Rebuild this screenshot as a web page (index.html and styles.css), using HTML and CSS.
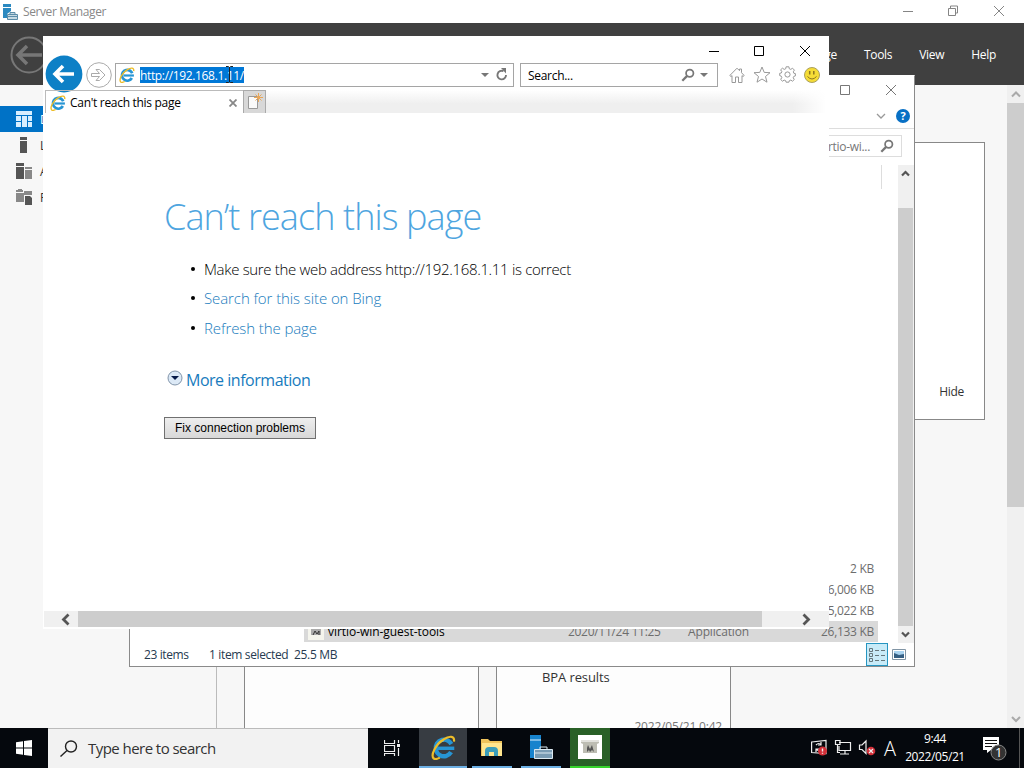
FILE: index.html
```html
<!DOCTYPE html>
<html>
<head>
  <meta charset="utf-8">
  <title>Can't reach this page</title>
  <link rel="stylesheet" href="styles.css">
</head>
<body>
  <svg width="0" height="0" class="defs">
    <symbol id="ie" viewBox="0 0 16 16">
      <circle cx="8.300" cy="8.300" r="5.300" fill="none" stroke="#2795d4" stroke-width="2.800" stroke-dasharray="27.700 5.600" transform="rotate(31 8.300 8.300)"/>
      <path d="M4.500 8.500h10.400" stroke="#2795d4" stroke-width="2.200"/>
      <path d="M4.200 6q1.500-2.300 4-2.500" fill="none" stroke="#7fcdf2"/>
      <path d="M1.700 15C-.4 12.800 3 6 8 2.900c3.700-2.500 7.300-2.600 6.700 1.300M1.700 15q1.200 1 4-.5" fill="none" stroke="#edbd29" stroke-width="1.400"/>
    </symbol>
    <symbol id="server" viewBox="0 0 24 24">
      <path d="M1 0h11v23H1z" fill="#1783cd"/>
      <path d="M1 5h11" stroke="#dff2ff"/>
      <path d="M5.500 14.500h18v9h-18z" fill="#799bb3" stroke="#dce9f1"/>
      <path d="M11 14v-2h7v2M6 18h17" fill="none" stroke="#dce9f1"/>
    </symbol>
    <symbol id="server-small" viewBox="0 0 16 16">
      <path d="M1 0h8v7L5 10v4H1z" fill="#2b89c0"/>
      <path d="M1 3.500h8" stroke="#fff"/>
      <path d="M5.500 10.500h10v5h-10zM8 10.500v-2h5v2M6 12.500h9" fill="#c7dae3" stroke="#5d8da8"/>
    </symbol>
    <symbol id="glass" viewBox="0 0 16 16">
      <circle cx="10" cy="6" r="4.200" fill="none" stroke="currentColor" stroke-width="2"/>
      <path d="M7 9L1.500 14.500" stroke="currentColor" stroke-width="2.600"/>
    </symbol>
  </svg>

  <div class="desktop">
    <!-- Server Manager -->
    <div class="window server-manager">
      <div class="sm-title">
        <svg width="16" height="16"><use href="#server-small"/></svg>
        <span class="sm-name">Server Manager</span>
        <svg class="sm-buttons" width="104" height="22" fill="none" stroke="#858585">
          <path d="M3 10.500h10M48.500 7.500h7v7h-7zM50.500 7v-2h7v7h-2M94 5l10 10M104 5l-10 10"/>
        </svg>
      </div>
      <div class="sm-header">
        <svg class="sm-back" width="38" height="38" fill="none" stroke="#777">
          <circle cx="19" cy="19" r="17.500" stroke-width="2"/>
          <path d="M8 19h24M17 10l-9 9 9 9" stroke-width="3.500"/>
        </svg>
        <div class="sm-menu"><span>Manage</span><span>Tools</span><span>View</span><span>Help</span></div>
      </div>
      <div class="sm-body">
        <div class="sm-side">
          <div class="side-item active"><svg width="16" height="16" fill="#d9efff"><path d="M0 0h16v4H0zM0 5h5v5H0zM0 11h5v5H0zM6 5h5v11H6zM12 5h4v5h-4zM12 11h4v5h-4z"/></svg>Dashboard</div>
          <div class="side-item"><svg width="16" height="16" fill="#555"><path d="M4 0h7v3H4zM4 4h7v12H4z"/></svg>Local Server</div>
          <div class="side-item"><svg width="16" height="16" fill="#555"><path d="M0 0h8v3H0zM0 4h8v12H0z"/><path d="M9 4h7v2H9zM9 7h7v9H9z" fill="#888"/></svg>All Servers</div>
          <div class="side-item"><svg width="16" height="16" fill="#888"><path d="M0 1h2V0h4v1h1v2H0zM0 4h8v9H0zM8 2h8v4H8z"/><path d="M9 7h5l2 2v7H9z" fill="#555"/></svg>File and Storage Services</div>
        </div>
        <div class="sm-main">
          <div class="welcome"><span>Hide</span></div>
          <div class="tiles">
            <div class="tile"></div>
            <div class="tile"><p>BPA results</p><p class="tile-time">2022/05/21 0:42</p></div>
          </div>
        </div>
        <div class="sm-scroll">
          <svg width="17" height="18" fill="none" stroke="#aaa" stroke-width="2"><path d="M5 11.500l4-4 4 4"/></svg>
          <div class="thumb"></div>
          <svg width="17" height="18" fill="none" stroke="#aaa" stroke-width="2"><path d="M5 7l4 4 4-4"/></svg>
        </div>
      </div>
    </div>

    <!-- File Explorer -->
    <div class="window explorer">
      <div class="ex-title">
        <svg width="56" height="12" fill="none" stroke="#777"><path d="M.5 1.500h9v9h-9zM46 1l10 10M56 1L46 11"/></svg>
      </div>
      <div class="ex-ribbon">
        <svg width="10" height="6" fill="none" stroke="#999" stroke-width="1.300"><path d="M1 1l4 4 4-4"/></svg>
        <span class="help">?</span>
      </div>
      <div class="ex-address"><div class="ex-search"><span>Search virtio-wi...</span><svg width="14" height="14"><use href="#glass"/></svg></div></div>
      <div class="ex-body">
        <div class="files">
          <div class="col-line"></div>
          <div class="file"><span class="size">2 KB</span></div>
          <div class="file"><span class="size">6,006 KB</span></div>
          <div class="file"><span class="size">5,022 KB</span></div>
          <div class="file selected">
            <svg width="16" height="16"><path d="M0 0h16v16H0z" fill="#f5f5ed"/><path d="M3 5h10v6H3z" fill="#aaa"/><path d="M5 11l2-4 2 3 2-3v4" fill="none" stroke="#333"/></svg>
            <span class="name">virtio-win-guest-tools</span><span class="date">2020/11/24 11:25</span><span class="type">Application</span><span class="size">26,133 KB</span>
          </div>
        </div>
        <div class="ex-scroll">
          <svg width="15" height="17" fill="none" stroke="#555" stroke-width="2.200"><path d="M4 10.500L7.500 7l3.500 3.500"/></svg>
          <div class="thumb"></div>
          <svg width="15" height="16" fill="none" stroke="#555" stroke-width="2.200"><path d="M4 6.500L7.500 10l3.500-3.500"/></svg>
        </div>
      </div>
      <div class="ex-status">
        <span class="count">23 items</span><span class="chosen">1 item selected</span><span>25.5 MB</span>
        <div class="view on"><svg width="18" height="14" fill="none" stroke="#66777d"><path d="M1.500.5h3v3h-3zM1.500 5.500h3v3h-3zM1.500 10.500h3v3h-3zM7 2.500h4M13 2.500h4M7 7.500h4M13 7.500h4M7 12.500h4M13 12.500h4"/></svg></div>
        <div class="view"><svg width="14" height="11"><path d="M.5.5h13v10H.5z" fill="#fff" stroke="#8195a5"/><path d="M2 2h10v7H2z" fill="#a9d3f0"/><path d="M2 4l5 2 5-1v4H2z" fill="#355f83"/></svg></div>
      </div>
    </div>

    <!-- Internet Explorer -->
    <div class="window ie">
      <div class="ie-top">
        <svg width="104" height="12" fill="none" stroke="#000"><path d="M0 6.500h10M45.500 1.500h9v9h-9zM91 1l10 10M101 1L91 11"/></svg>
      </div>
      <div class="ie-nav">
        <svg class="back" width="38" height="38"><circle cx="19" cy="19" r="18.400" fill="#0d80c6"/><path d="M9.500 19H29M18 11l-8 8 8 8" fill="none" stroke="#fff" stroke-width="3.600"/></svg>
        <svg class="forward" width="26" height="26" fill="none" stroke="#aaa"><circle cx="13" cy="13" r="12.300"/><path d="M5.500 11.500h8l-3.500-4h3.500l5.500 5.500-5.500 5.500H10l3.500-4h-8z"/></svg>
        <div class="box address">
          <svg width="16" height="16"><use href="#ie"/></svg>
          <span class="url">http://192.168.1.11/</span>
          <svg class="address-tools" width="28" height="14"><path d="M0 5h8l-4 4z" fill="#777"/><path d="M22.500 3.200A4.300 4.300 0 1 0 25 7" fill="none" stroke="#777" stroke-width="1.900"/><path d="M20 0h5v5.500z" fill="#777"/></svg>
        </div>
        <div class="box search">
          <span>Search...</span>
          <svg width="14" height="14"><use href="#glass"/></svg>
          <svg width="8" height="5" fill="#777"><path d="M0 0h8L4 4z"/></svg>
        </div>
        <div class="ie-tools">
          <svg width="16" height="16" fill="none" stroke="#999"><path d="M.8 8.500L8 1.200l2.500 2.500V2h2v3.700l2.700 2.800-1.200 1-1-.9v6.900h-3.500V10h-3v5.500H3V8.600l-1 .9z"/></svg>
          <svg width="18" height="17" fill="none" stroke="#999"><path d="M9 1l2.200 5.400 5.800.3-4.500 3.800 1.500 5.700L9 13l-5 3.200 1.500-5.700L1 6.700l5.800-.3z"/></svg>
          <svg width="17" height="17" viewBox="-8.500 -8.500 17 17" fill="none" stroke="#999"><path d="M-1.400-7.700h2.800l.4 2 1.500.6L5-6.300l1.900 1.900-1.100 1.700.6 1.500 1.500.3v2.300l-1.600.5-.6 1.400L6.800 5 5 6.700 3.300 5.600l-1.500.6-.4 1.500h-2.800l-.4-1.500-1.500-.6L-5 6.700-6.800 5l1.100-2-.6-1.400-1.500-.5v-2.300l1.600-.3.5-1.500-1.200-1.700L-5-6.300l1.700 1.200 1.500-.6z"/><circle r="2.600"/></svg>
          <svg width="16" height="16"><circle cx="8" cy="8" r="7.500" fill="#f5dc36" stroke="#aaa05e"/><path d="M5.700 4v3.500M9.800 4v3.500" stroke="#8c7520" stroke-width="1.500"/><path d="M3.500 9.500q4.500 5 9 0" fill="none" stroke="#8c7520"/></svg>
        </div>
      </div>
      <div class="tabs">
        <div class="tab">
          <svg width="16" height="16"><use href="#ie"/></svg><span>Can't reach this page</span>
          <svg class="tab-close" width="8" height="8" stroke="#888" stroke-width="1.800"><path d="M.5.500l7 7M7.500.500l-7 7"/></svg>
        </div>
        <div class="new-tab"><svg width="17" height="17"><path d="M1.500 3.500h9v12h-9z" fill="#fafafa" stroke="#999"/><path d="M11.500 0v9M7 4.500h9M8.500 1.500l6 6M14.500 1.500l-6 6" stroke="#e9a75a"/></svg></div>
        <div class="tab-rest"></div>
      </div>
      <div class="page">
        <h1>Can’t reach this page</h1>
        <ul>
          <li><span class="line1">Make sure the web address http://192.168.1.11 is correct</span></li>
          <li><a>Search for this site on Bing</a></li>
          <li><a>Refresh the page</a></li>
        </ul>
        <div class="more">
          <svg width="16" height="16"><circle cx="8" cy="8" r="7" fill="#dce9f6" stroke="#8295aa"/><path d="M4 6h8l-4 4z" fill="#061a48"/></svg><a>More information</a>
        </div>
        <button>Fix connection problems</button>
      </div>
      <div class="ie-scroll">
        <svg width="34" height="16" fill="none" stroke="#555" stroke-width="2.800"><path d="M24.500 3.500l-5 5 5 5"/></svg>
        <div class="thumb"></div>
        <svg width="67" height="16" fill="none" stroke="#555" stroke-width="2.800"><path d="M41.500 3.500l5 5-5 5"/></svg>
      </div>
      <!-- text cursor over the address -->
      <svg class="cursor" width="9" height="17" fill="none" stroke="#222"><path d="M1 .5h2.500l1 1 1-1H8M4.500 1v15M1 16.500h2.500l1-1 1 1H8"/></svg>
    </div>

    <div class="taskbar">
      <div class="start"><svg width="16" height="16" fill="#fff"><path d="M0 2.200L7 1.200v6.300H0zM8 1l8-1v7.500H8zM0 8.500h7v6.300l-7-1zM8 8.500h8V16l-8-1z"/></svg></div>
      <div class="task-search">
        <svg width="18" height="18" fill="none" stroke="#222" stroke-width="1.400"><circle cx="11" cy="6.500" r="5.500"/><path d="M7 10.500l-6.500 6"/></svg>
        <span>Type here to search</span>
      </div>
      <div class="task view-task"><svg width="17" height="16" fill="none" stroke="#eee" stroke-width="1.200"><path d="M.5 0v3.500h10V0M.5 5.500h10v6H.5zM.5 16v-2.500h10V16M14.500 0v3M14.500 8v8"/><path d="M13 4h3v3h-3z" fill="#eee" stroke="none"/></svg></div>
      <div class="task ie-task"><svg width="25" height="25"><use href="#ie"/></svg></div>
      <div class="task"><svg width="22" height="19"><path d="M0 1h7l2 2h12v15H0z" fill="#efc35b"/><path d="M1 5h20v13H1z" fill="#ffe58e"/><path d="M4 18v-5q0-4 4-4h5q4 0 4 4v5h-4v-4H8v4z" fill="#3c9eb9"/></svg></div>
      <div class="task"><svg width="24" height="24"><use href="#server"/></svg></div>
      <div class="task virtio"><svg width="24" height="24"><path d="M0 0h24v24H0z" fill="#fff"/><path d="M3 5h18v3l-2 1v9H5V9L3 8z" fill="#bdbdb3"/><path d="M3 5h18v2H3z" fill="#e2e2dd"/><path d="M9 17v-4l1-3 2 4 2-4 2 7-2-2-2 2-1-2z" fill="#555"/></svg></div>
      <div class="tray">
        <svg class="tray-icons" width="66" height="18" fill="none" stroke="#eee" stroke-width="1.200">
          <path d="M.600 3L15 1.500v13L.600 13.500zM5 6q3-3 5 0M5 10q3 3 5 0M10 3v3H7M5 13v-3h3"/><circle cx="11.500" cy="12" r="4.500" fill="#d22f38" stroke="none"/><path d="M11.500 9.500v3M11.500 13.700v1" stroke-width="1.400"/>
          <path d="M28 3.500h11.500v8H28V7M24.500 1.500h4.500v4h-4.500zM26.500 6v7.500H29M34 12v3M29 15h9"/>
          <path d="M48.500 6v4.500h2.500l4 4V2l-4 4z"/><circle cx="60" cy="12" r="4.300" fill="#d22f38" stroke="none"/><path d="M58 10l4 4M62 10l-4 4"/>
        </svg>
        <span class="lang">A</span>
        <div class="clock"><span>9:44</span><span class="day">2022/05/21</span></div>
        <svg class="notes" width="26" height="26"><path d="M1 2h16v13H9l-4 3v-3H1z" fill="#fff"/><path d="M3 5.500h12M3 8.500h12M3 11.500h7" stroke="#111"/><circle cx="16.500" cy="17.500" r="7.500" fill="#333" stroke="#888"/><text x="13" y="22" fill="#fff">1</text></svg>
        <div class="show-desktop"></div>
      </div>
    </div>
  </div>
</body>
</html>
```

FILE: styles.css
```css
* {
  box-sizing: border-box;
}

body {
  margin: 0;
  font-family: "Open Sans", "Noto Sans", sans-serif;
  font-size: 12px;
  letter-spacing: -0.3px;
  color: #333;
}

svg {
  display: block;
  flex-shrink: 0;
}

span, a {
  white-space: nowrap;
}

.defs {
  position: absolute;
}

.desktop {
  position: relative;
  width: 1024px;
  height: 768px;
  overflow: hidden;
}

.window {
  position: absolute;
  display: flex;
  flex-direction: column;
  overflow: hidden;
}

.thumb {
  background-color: #cdcdcd;
}

/* Server Manager */
.server-manager {
  left: 0;
  top: 0;
  width: 1024px;
  height: 728px;
  background-color: #f7f7f7;
}

.sm-title {
  height: 23px;
  display: flex;
  align-items: center;
  padding-left: 2px;
  background-color: #fff;
  color: #888;
}

.sm-name {
  margin-left: 5px;
  letter-spacing: -0.4px;
}

.sm-buttons {
  margin-left: auto;
  margin-right: 20px;
}

.sm-header {
  height: 62px;
  display: flex;
  align-items: center;
  justify-content: space-between;
  padding: 0 28px 0 10px;
  background-color: #404040;
  color: #fff;
}

.sm-back {
  margin-top: 1px;
}

.sm-menu {
  display: flex;
  gap: 27px;
  padding-top: 1px;
}

.sm-body {
  flex: 1;
  display: flex;
  min-height: 0;
}

.sm-side {
  width: 217px;
  padding-top: 21px;
  border-right: 1px solid #bbb;
}

.side-item {
  height: 26px;
  display: flex;
  align-items: center;
  gap: 8px;
  padding-left: 16px;
}

.side-item.active {
  background-color: #0072c6;
  color: #fff;
}

.sm-main {
  flex: 1;
  padding: 57px 22px 0 27px;
}

.welcome {
  height: 278px;
  display: flex;
  align-items: flex-end;
  justify-content: flex-end;
  padding: 0 20px 19px;
  border: 1px solid #888;
  background-color: #fff;
}

.tiles {
  display: flex;
  gap: 17px;
  padding-top: 230px;
}

.tile {
  width: 235px;
  height: 120px;
  padding: 17px 8px 0 45px;
  border: 1px solid #888;
  background-color: #fdfdfd;
}

.tile p {
  margin: 0;
  font-size: 13px;
  line-height: 18px;
  letter-spacing: -0.1px;
}

.tile .tile-time {
  margin-top: 32px;
  text-align: right;
  font-size: 12px;
  letter-spacing: -0.2px;
  color: #777;
}

.sm-scroll {
  width: 17px;
  display: flex;
  flex-direction: column;
  background-color: #f0f0f0;
}

.sm-scroll .thumb {
  height: 404px;
  margin-bottom: auto;
}

/* File Explorer */
.explorer {
  left: 129px;
  top: 75px;
  width: 786px;
  height: 592px;
  border: 1px solid #8a8a8a;
  border-top-color: #fff;
  background-color: #fff;
}

.ex-title {
  height: 27px;
  display: flex;
  align-items: center;
  justify-content: flex-end;
  padding-right: 18px;
}

.ex-ribbon {
  height: 26px;
  display: flex;
  align-items: center;
  justify-content: flex-end;
  gap: 10px;
  padding-right: 4px;
  border-bottom: 1px solid #ddd;
}

.help {
  width: 14px;
  height: 14px;
  border-radius: 50%;
  background-color: #0870c5;
  color: #fff;
  font-size: 11px;
  font-weight: bold;
  line-height: 14px;
  text-align: center;
}

.ex-address {
  height: 36px;
  display: flex;
  justify-content: flex-end;
  padding: 6px 12px;
}

.ex-search {
  width: 180px;
  height: 22px;
  display: flex;
  align-items: center;
  justify-content: flex-end;
  gap: 10px;
  padding-right: 7px;
  border: 1px solid #ddd;
  color: #777;
}

.ex-body {
  height: 478px;
  display: flex;
}

.files {
  flex: 1;
  padding: 0 20px 0 174px;
}

.col-line {
  height: 24px;
  margin: 0 -4px 369px 0;
  border-right: 1px solid #ddd;
}

.file {
  height: 21px;
  display: flex;
  align-items: center;
  padding: 0 4px;
  color: #6d6d6d;
}

.file.selected {
  background-color: #d9d9d9;
}

.file .name {
  width: 240px;
  margin-left: 4px;
  letter-spacing: -0.05px;
  color: #000;
}

.file .date {
  width: 120px;
}

.file .type {
  letter-spacing: -0.15px;
}

.file .size {
  margin-left: auto;
}

.ex-scroll {
  width: 16px;
  background-color: #f0f0f0;
}

.ex-scroll .thumb {
  width: 15px;
  height: 418px;
  margin-top: 26px;
}

.ex-status {
  flex: 1;
  display: flex;
  align-items: center;
  padding: 0 4px 0 14px;
  color: #263a50;
}

.count {
  width: 65px;
  letter-spacing: -0.4px;
}

.chosen {
  width: 85px;
  letter-spacing: -0.35px;
}

.view {
  width: 22px;
  height: 23px;
  display: flex;
  align-items: center;
  justify-content: center;
}

.view.on {
  margin-left: auto;
  border: 1px solid #2695c1;
  background-color: #c8ebf8;
}

/* Internet Explorer */
.ie {
  left: 43px;
  top: 36px;
  width: 786px;
  height: 593px;
  background-color: #fff;
  color: #000;
}

.ie-top {
  height: 21px;
  display: flex;
  align-items: flex-end;
  justify-content: flex-end;
  padding-right: 16px;
}

.ie-nav {
  height: 33px;
  display: flex;
  align-items: center;
  padding: 3px 9px 0 2px;
}

.back {
  margin-top: -2px;
}

.forward {
  margin-left: 3px;
  margin-right: 3px;
}

.box {
  height: 24px;
  display: flex;
  align-items: center;
  border: 1px solid #a5a5a5;
}

.address {
  width: 399px;
  padding: 0 4px 0 3px;
}

.url {
  height: 16px;
  margin-left: 5px;
  line-height: 17px;
  letter-spacing: -0.35px;
  background-color: #0078d7;
  color: #fff;
}

.address-tools {
  margin-left: auto;
}

.search {
  width: 198px;
  margin-left: 6px;
  padding: 0 9px 0 7px;
}

.search svg {
  margin-left: 5px;
  color: #777;
}

.search span {
  flex: 1;
}

.ie-tools {
  display: flex;
  align-items: center;
  gap: 8px;
  margin-left: auto;
  margin-top: -1px;
}

.tabs {
  height: 23px;
  display: flex;
  padding-left: 2px;
}

.tab {
  width: 198px;
  display: flex;
  align-items: center;
  gap: 4px;
  padding: 1px 6px 0 4px;
  border-left: 1px solid #bbb;
  border-top: 1px solid #bbb;
}

.tab-close {
  margin-left: auto;
}

.new-tab {
  width: 23px;
  padding: 2px 3px;
  border: 1px solid #aaa;
  border-bottom: 0;
  background-color: #d8d8d8;
}

.tab-rest {
  width: 560px;
  background: linear-gradient(to right, transparent 94%, #fff), linear-gradient(#fff, #efefef 60%);
}

.page {
  height: 498px;
  padding: 82px 0 0 121px;
}

.page h1 {
  height: 44px;
  margin: 0;
  font-size: 36px;
  font-weight: 300;
  line-height: 44px;
  letter-spacing: -0.9px;
  color: #4ea5df;
}

.page ul {
  margin: 15px 0 0;
  padding-left: 40px;
  font-size: 15px;
  list-style: none;
}

.page li {
  height: 29.500px;
  display: flex;
  align-items: center;
}

.page li::before {
  content: "";
  width: 4px;
  height: 4px;
  margin-left: -13px;
  margin-right: 9px;
  border-radius: 50%;
  background-color: #000;
}

.page li span,
.page li a {
  font-weight: 300;
  letter-spacing: -0.09px;
}

.page li .line1 {
  letter-spacing: -0.33px;
}

.page a {
  color: #187bbd;
}

.more {
  height: 24px;
  display: flex;
  align-items: center;
  gap: 3px;
  margin-top: 25px;
  padding-left: 3px;
  font-size: 16px;
  letter-spacing: -0.48px;
}

.more svg {
  margin-top: -3px;
}

.page button {
  width: 152px;
  height: 22px;
  display: block;
  margin-top: 25px;
  padding: 0;
  border: 1px solid #707070;
  background: linear-gradient(#eee, #d8d8d8);
  font: 12px "Liberation Sans", sans-serif;
}

.ie-scroll {
  height: 16px;
  display: flex;
  margin: 0 0 0 1px;
  background-color: #f0f0f0;
}

.ie-scroll .thumb {
  flex: 1;
}

.cursor {
  position: absolute;
  left: 182px;
  top: 30px;
}

/* Taskbar */
.taskbar {
  position: absolute;
  left: 0;
  bottom: 0;
  width: 1024px;
  height: 40px;
  display: flex;
  background-color: #05080d;
  color: #fff;
}

.start {
  width: 48px;
  display: flex;
  align-items: center;
  justify-content: center;
}

.task-search {
  width: 320px;
  display: flex;
  align-items: center;
  gap: 10px;
  padding-left: 12px;
  border-top: 1px solid #bbb;
  background-color: #f2f2f2;
  color: #333;
  font-size: 15px;
  letter-spacing: -0.55px;
}

.task-search span {
  margin-top: -2px;
}

.task {
  width: 40px;
  height: 40px;
  display: flex;
  align-items: center;
  justify-content: center;
  margin-right: 9px;
  border-bottom: 2px solid #6cafe3;
}

.view-task {
  width: 48px;
  margin-right: 3px;
  border: 0;
}

.ie-task {
  width: 48px;
  margin-right: 5px;
  background-color: #373c42;
}

.virtio {
  background-color: #296027;
  border-color: #36d32c;
}

.tray {
  margin-left: auto;
  display: flex;
  align-items: center;
  width: 213px;
}

.lang {
  width: 18px;
  margin-left: 7px;
  font-size: 20px;
  font-weight: 300;
}

.clock {
  width: 70px;
  display: flex;
  flex-direction: column;
  align-items: center;
  margin-left: -2px;
  line-height: 18px;
  letter-spacing: -0.4px;
}

.notes {
  margin-left: 12px;
  font-size: 13px;
}

.show-desktop {
  height: 40px;
  margin-left: auto;
  margin-right: 4px;
  border-left: 1px solid #555;
}
```
